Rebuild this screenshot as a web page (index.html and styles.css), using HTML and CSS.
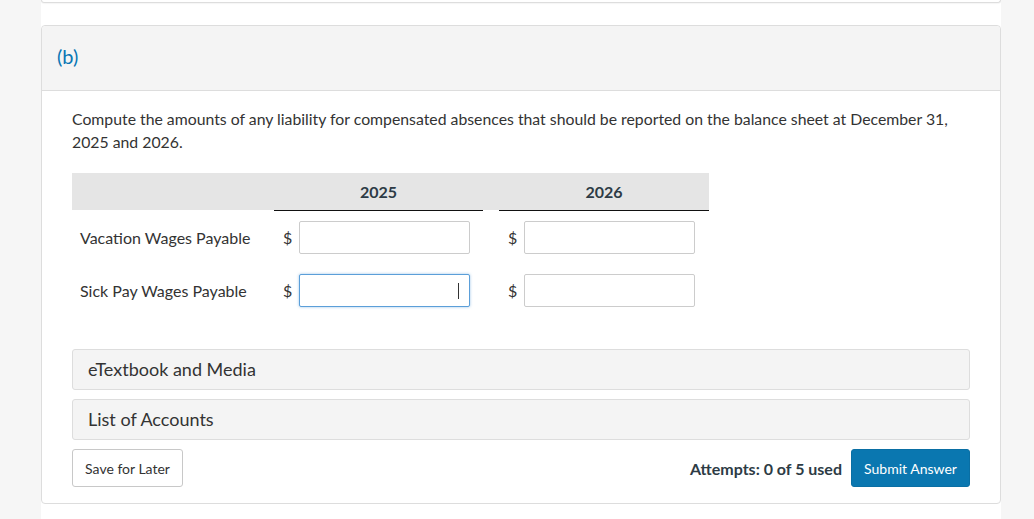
FILE: index.html
```html
<!DOCTYPE html>
<html>
<head>
<meta charset="utf-8">
<link rel="stylesheet" href="styles.css">
</head>
<body>
<div class="column">
  <div class="prev-card"></div>
  <div class="card">
    <div class="card-head"><span class="part">(b)</span></div>
    <div class="card-body">
      <p class="question">Compute the amounts of any liability for compensated absences that should be reported on the balance sheet at December 31, 2025 and 2026.</p>
      <div class="table">
        <div class="thead">
          <div class="th th-label"></div>
          <div class="th th-year">2025</div>
          <div class="th th-gap"></div>
          <div class="th th-year">2026</div>
        </div>
        <div class="tr">
          <div class="td-label">Vacation Wages Payable</div>
          <div class="td-val"><span class="cur">$</span><span class="input"></span></div>
          <div class="td-gap"></div>
          <div class="td-val"><span class="cur">$</span><span class="input"></span></div>
        </div>
        <div class="tr">
          <div class="td-label">Sick Pay Wages Payable</div>
          <div class="td-val"><span class="cur">$</span><span class="input focused"><span class="caret"></span></span></div>
          <div class="td-gap"></div>
          <div class="td-val"><span class="cur">$</span><span class="input"></span></div>
        </div>
      </div>
      <div class="accordion first">eTextbook and Media</div>
      <div class="accordion">List of Accounts</div>
      <div class="footer">
        <button class="btn btn-save">Save for Later</button>
        <div class="right">
          <span class="attempts">Attempts: 0 of 5 used</span>
          <button class="btn btn-submit">Submit Answer</button>
        </div>
      </div>
    </div>
  </div>
</div>
</body>
</html>
```
FILE: styles.css
```css
html, body {
  margin: 0;
  padding: 0;
}
body {
  background: #f6f6f6;
  font-family: Lato, "Open Sans", sans-serif;
  color: #333;
}
.column {
  width: 960px;
  margin-left: 41px;
  background: #fff;
  min-height: 519px;
  box-sizing: border-box;
}
.prev-card {
  height: 2px;
  border: 1px solid #ddd;
  border-top: none;
  border-radius: 0 0 4px 4px;
  box-shadow: 0 1px 1px rgba(0,0,0,0.04);
}
.card {
  margin-top: 22px;
  border: 1px solid #ddd;
  border-radius: 4px;
}
.card-head {
  height: 64px;
  background: #f4f4f4;
  border-bottom: 1px solid #ddd;
  border-radius: 4px 4px 0 0;
  display: flex;
  align-items: center;
  padding-left: 15px;
}
.part {
  font-size: 20px;
  color: #0a77b4;
  margin-top: -5px;
}
.card-body {
  padding: 16px 30px 16px 30px;
}
.question {
  margin: 0;
  font-size: 15.8px;
  line-height: 23px;
  color: #333;
}
.table {
  margin-top: 20px;
  width: 637px;
}
.thead, .tr {
  display: grid;
  grid-template-columns: 202px 209px 16px 210px;
}
.thead {
  align-items: start;
}
.th {
  height: 37px;
  background: #e5e5e5;
  font-size: 16px;
  font-weight: 700;
  color: #2d3b45;
  display: flex;
  align-items: center;
  justify-content: center;
}
.th-year {
  border-bottom: 1px solid #111;
}
.tr {
  height: 53px;
  align-items: center;
}
.td-label {
  padding-left: 8px;
  font-size: 16px;
  color: #333;
}
.td-val {
  display: flex;
  align-items: center;
  padding-left: 9px;
}
.cur {
  font-size: 16px;
  color: #333;
  width: 16px;
}
.input {
  display: block;
  width: 169px;
  height: 31px;
  border: 1px solid #ccc;
  border-radius: 2px;
  background: #fff;
  position: relative;
}
.input.focused {
  border-color: #5b9fd9;
  box-shadow: 0 0 3px rgba(91, 159, 217, 0.6);
}
.caret {
  position: absolute;
  left: 158px;
  top: 8px;
  width: 1px;
  height: 16px;
  background: #333;
}
.accordion {
  height: 38px;
  border: 1px solid #ddd;
  border-radius: 3px;
  background: #f4f4f4;
  font-size: 18px;
  color: #333;
  display: flex;
  align-items: center;
  padding-left: 15px;
  padding-bottom: 1px;
  margin-top: 9px;
}
.accordion.first {
  margin-top: 32px;
}
.footer {
  display: flex;
  justify-content: space-between;
  align-items: center;
  margin-top: 9px;
}
.right {
  display: flex;
  align-items: center;
  gap: 9px;
}
.btn {
  font-family: Lato, "Open Sans", sans-serif;
  font-size: 14px;
  height: 38px;
  border-radius: 3px;
  padding: 0;
  cursor: pointer;
}
.btn-save {
  width: 111px;
  background: #fff;
  border: 1px solid #c8c8c8;
  color: #333;
}
.btn-submit {
  width: 119px;
  background: #0a77b0;
  border: 1px solid #0a6fa4;
  color: #fff;
}
.attempts {
  font-size: 16px;
  font-weight: 700;
  color: #2d3b45;
}
```
